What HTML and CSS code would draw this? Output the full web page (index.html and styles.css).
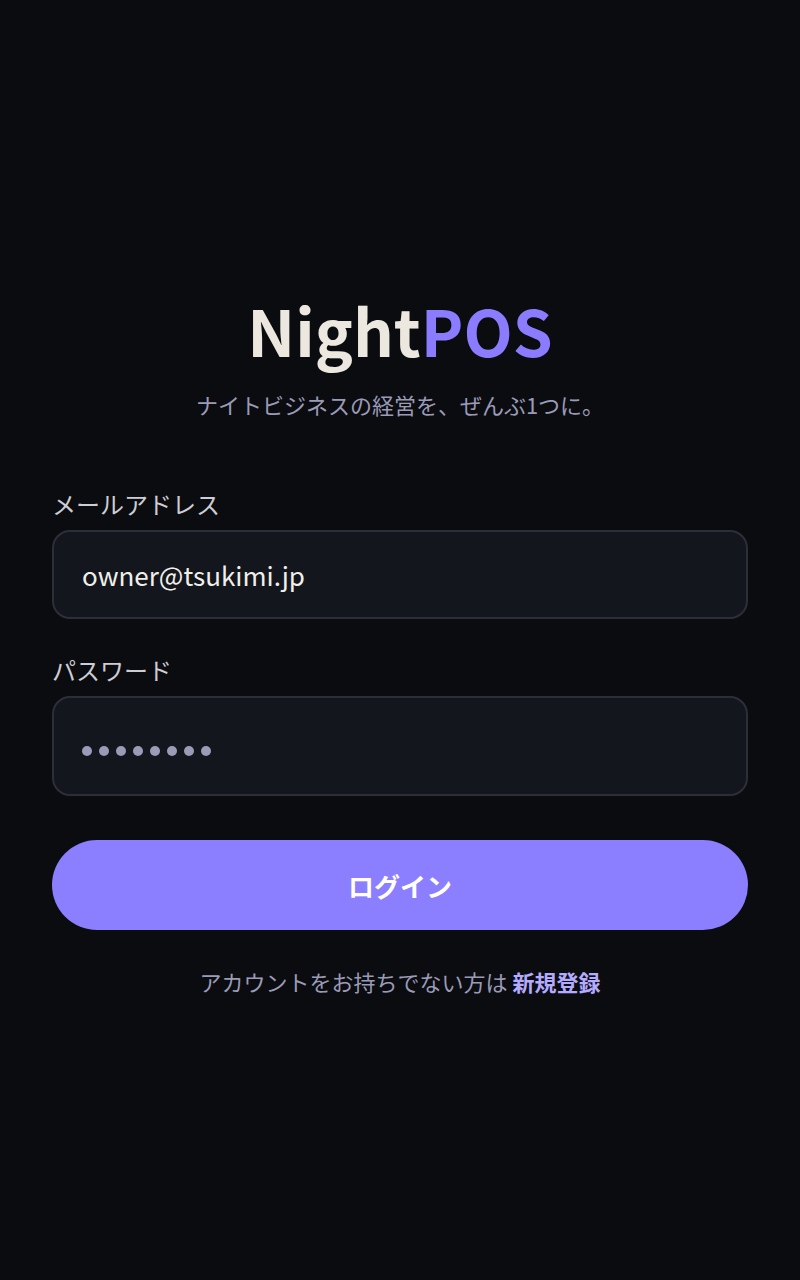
FILE: index.html
```html
<!DOCTYPE html>
<html lang="ja">
  <head>
    <meta charset="UTF-8" />
    <meta name="viewport" content="width=device-width, initial-scale=1.0" />
    <link rel="stylesheet" href="styles.css">
    <title>NightPOS ログイン</title>
  </head>

  <body>
    <main class="loginPage">
      <div class="brand">
        <h1 class="logo">Night<span class="logoAccent">POS</span></h1>
        <p class="tagline">ナイトビジネスの経営を、ぜんぶ1つに。</p>
      </div>

      <form class="loginForm">
        <label class="fieldLabel" for="email">メールアドレス</label>
        <div class="field">owner@tsukimi.jp</div>

        <label class="fieldLabel" for="password">パスワード</label>
        <div class="field password">
          <span class="dot"></span><span class="dot"></span><span class="dot"></span><span class="dot"></span><span class="dot"></span><span class="dot"></span><span class="dot"></span><span class="dot"></span>
        </div>

        <button type="button" class="loginButton">ログイン</button>
      </form>

      <p class="signup">アカウントをお持ちでない方は <a href="#" class="signupLink">新規登録</a></p>
    </main>
  </body>
</html>
```

FILE: styles.css
```css
body {
  margin: 0px;
  background-color: #0b0c10;
  font-family: "Noto Sans CJK JP", "Noto Sans", sans-serif;
  color: #ece8df;
}
.loginPage {
  display: flex;
  flex-direction: column;
  padding: 284px 52px 0px;
}
.brand {
  text-align: center;
}
.logo {
  font-size: 64px;
  font-weight: 700;
  line-height: 90px;
  margin: 0px;
  color: #ece8df;
}
.logoAccent {
  color: #8b7cff;
}
.tagline {
  margin: 14px 0px 0px;
  font-size: 22px;
  line-height: 32px;
  color: #9b9bb8;
}
.loginForm {
  display: flex;
  flex-direction: column;
  margin-top: 68px;
}
.fieldLabel {
  font-size: 24px;
  line-height: 32px;
  color: #cfcdd4;
  margin-bottom: 10px;
}
.field {
  display: flex;
  align-items: center;
  box-sizing: border-box;
  height: 89px;
  padding: 0px 28px;
  margin-bottom: 35px;
  background-color: #13161d;
  border: 2px solid #2c2f3a;
  border-radius: 18px;
  font-size: 26px;
  color: #f1efe9;
}
.field.password {
  height: 100px;
  padding-top: 10px;
  margin-bottom: 44px;
  gap: 7px;
}
.dot {
  width: 10px;
  height: 10px;
  border-radius: 50%;
  background-color: #9b9bb8;
}
.loginButton {
  height: 90px;
  border: none;
  border-radius: 45px;
  background-color: #8b7eff;
  color: #ffffff;
  font-family: inherit;
  font-size: 26px;
  font-weight: 700;
  cursor: pointer;
}
.signup {
  margin: 36px 0px 0px;
  text-align: center;
  font-size: 22px;
  line-height: 30px;
  color: #9b9bb8;
}
.signupLink {
  color: #b4abff;
  font-weight: 700;
  text-decoration: none;
}
```
